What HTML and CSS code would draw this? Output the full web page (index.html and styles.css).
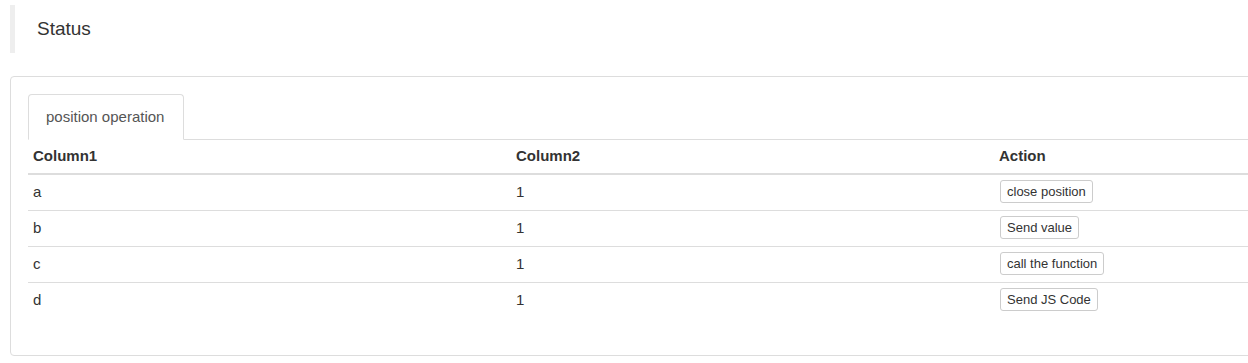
FILE: index.html
```html
<!DOCTYPE html>
<html lang="en">
<head>
<meta charset="utf-8">
<title>Status</title>
<link rel="stylesheet" href="styles.css">
</head>
<body>
<div class="page">
  <div class="page-header">Status</div>
  <div class="card">
    <ul class="tabs">
      <li class="tab active">position operation</li>
    </ul>
    <table class="grid">
      <thead>
        <tr><th>Column1</th><th>Column2</th><th>Action</th></tr>
      </thead>
      <tbody>
        <tr><td>a</td><td>1</td><td><button class="btn">close position</button></td></tr>
        <tr><td>b</td><td>1</td><td><button class="btn">Send value</button></td></tr>
        <tr><td>c</td><td>1</td><td><button class="btn">call the function</button></td></tr>
        <tr><td>d</td><td>1</td><td><button class="btn">Send JS Code</button></td></tr>
      </tbody>
    </table>
  </div>
</div>
</body>
</html>
```

FILE: styles.css
```css
html, body {
  margin: 0;
  padding: 0;
  overflow: hidden;
  background: #fff;
}
body {
  font-family: "Liberation Sans", Arial, sans-serif;
  font-size: 15px;
  line-height: 20px;
  color: #333;
}
.page {
  padding: 5px 10px;
}
.page-header {
  border-left: 5px solid #eeeeee;
  height: 48px;
  line-height: 48px;
  padding-left: 22px;
  font-size: 19px;
  color: #333;
}
.card {
  margin-top: 23px;
  width: 1449px;
  border: 1px solid #dddddd;
  border-radius: 4px;
  padding: 17px;
}
.tabs {
  list-style: none;
  margin: 0;
  padding: 0;
  display: flex;
  border-bottom: 1px solid #dddddd;
}
.tab {
  margin-bottom: -1px;
  padding: 12px 19px 12px 17px;
  border: 1px solid #dddddd;
  border-bottom-color: transparent;
  border-radius: 4px 4px 0 0;
  background: #fff;
  color: #555;
  font-size: 15px;
  line-height: 20px;
}
.grid {
  width: 100%;
  border-collapse: collapse;
  table-layout: fixed;
  margin-bottom: 20px;
  font-size: 15px;
}
.grid th,
.grid td {
  text-align: left;
  padding: 5px 5px 7px;
  vertical-align: middle;
  line-height: 20px;
}
.grid th {
  font-weight: bold;
  line-height: 21px;
  border-bottom: 2px solid #dddddd;
}
.grid tbody tr + tr td {
  border-top: 1px solid #dddddd;
}
.btn {
  font-family: "Liberation Sans", Arial, sans-serif;
  font-size: 13px;
  line-height: 17px;
  padding: 2px 6px;
  margin: 0 0 0 1px;
  color: #333;
  background: #fff;
  border: 1px solid #cccccc;
  border-radius: 3px;
}
```
